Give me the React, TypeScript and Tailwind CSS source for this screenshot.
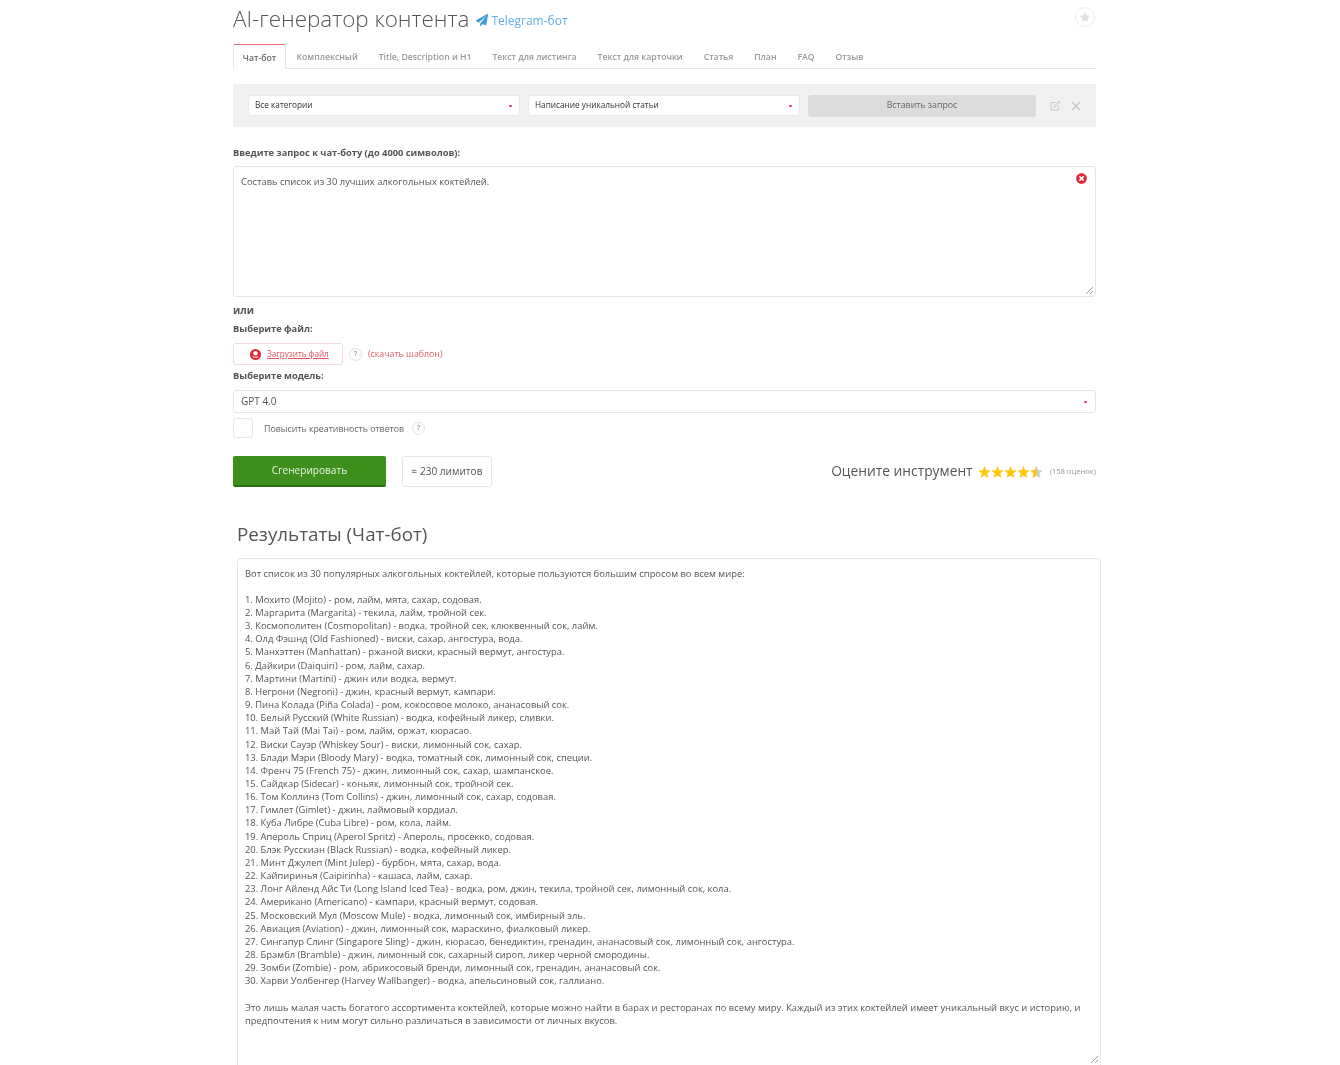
import React from "react";
import { FaPaperPlane, FaStar, FaTimesCircle } from "react-icons/fa";

const tabs = [
  "Комплексный",
  "Title, Description и H1",
  "Текст для листинга",
  "Текст для карточки",
  "Статья",
  "План",
  "FAQ",
  "Отзыв",
];

const cocktails = [
  "1. Мохито (Mojito) - ром, лайм, мята, сахар, содовая.",
  "2. Маргарита (Margarita) - текила, лайм, тройной сек.",
  "3. Космополитен (Cosmopolitan) - водка, тройной сек, клюквенный сок, лайм.",
  "4. Олд Фэшнд (Old Fashioned) - виски, сахар, ангостура, вода.",
  "5. Манхэттен (Manhattan) - ржаной виски, красный вермут, ангостура.",
  "6. Дайкири (Daiquiri) - ром, лайм, сахар.",
  "7. Мартини (Martini) - джин или водка, вермут.",
  "8. Негрони (Negroni) - джин, красный вермут, кампари.",
  "9. Пина Колада (Piña Colada) - ром, кокосовое молоко, ананасовый сок.",
  "10. Белый Русский (White Russian) - водка, кофейный ликер, сливки.",
  "11. Май Тай (Mai Tai) - ром, лайм, оржат, кюрасао.",
  "12. Виски Сауэр (Whiskey Sour) - виски, лимонный сок, сахар.",
  "13. Блади Мэри (Bloody Mary) - водка, томатный сок, лимонный сок, специи.",
  "14. Френч 75 (French 75) - джин, лимонный сок, сахар, шампанское.",
  "15. Сайдкар (Sidecar) - коньяк, лимонный сок, тройной сек.",
  "16. Том Коллинз (Tom Collins) - джин, лимонный сок, сахар, содовая.",
  "17. Гимлет (Gimlet) - джин, лаймовый кордиал.",
  "18. Куба Либре (Cuba Libre) - ром, кола, лайм.",
  "19. Апероль Сприц (Aperol Spritz) - Апероль, просекко, содовая.",
  "20. Блэк Русскиан (Black Russian) - водка, кофейный ликер.",
  "21. Минт Джулеп (Mint Julep) - бурбон, мята, сахар, вода.",
  "22. Кайпиринья (Caipirinha) - кашаса, лайм, сахар.",
  "23. Лонг Айленд Айс Ти (Long Island Iced Tea) - водка, ром, джин, текила, тройной сек, лимонный сок, кола.",
  "24. Американо (Americano) - кампари, красный вермут, содовая.",
  "25. Московский Мул (Moscow Mule) - водка, лимонный сок, имбирный эль.",
  "26. Авиация (Aviation) - джин, лимонный сок, мараскино, фиалковый ликер.",
  "27. Сингапур Слинг (Singapore Sling) - джин, кюрасао, бенедиктин, гренадин, ананасовый сок, лимонный сок, ангостура.",
  "28. Брамбл (Bramble) - джин, лимонный сок, сахарный сироп, ликер черной смородины.",
  "29. Зомби (Zombie) - ром, абрикосовый бренди, лимонный сок, гренадин, ананасовый сок.",
  "30. Харви Уолбенгер (Harvey Wallbanger) - водка, апельсиновый сок, галлиано.",
];

const Help = () => (
  <span className="flex h-[13px] w-[13px] items-center justify-center rounded-full border border-[#e2e2e2] text-[7px] font-semibold text-[#999]">
    ?
  </span>
);

const Caret = () => <span className="h-[2px] w-[3px] rounded-full bg-[#e8374a]" />;

const Select = ({ label }: { label: string }) => (
  <div className="flex h-[21px] w-[272px] items-center justify-between rounded-[3px] border border-[#e9e9e9] bg-white pl-[6px] pr-[7px] text-[8.25px] text-[#333]">
    <span>{label}</span>
    <Caret />
  </div>
);

const ResizeHandle = () => (
  <svg className="absolute bottom-[1px] right-[1px]" width="9" height="9" viewBox="0 0 9 9">
    <path d="M1 8 8 1M5 8 8 5" stroke="#8c8c8c" strokeWidth="0.8" />
  </svg>
);

const Star = ({ half = false }: { half?: boolean }) => (
  <svg width="13" height="12" viewBox="0 0 24 23">
    <path d="M12 0l3.2 8.2 8.8.5-6.8 5.6 2.3 8.5L12 18l-7.5 4.8 2.3-8.5L0 8.7l8.8-.5z" fill={half ? "#c9c9c9" : "#fbc80c"} />
    {half && <path d="M12 0v18l-7.5 4.8 2.3-8.5L0 8.7l8.8-.5z" fill="#fbc80c" />}
  </svg>
);

const App: React.FC = () => {
  return (
    <div className="h-[1065px] w-[1340px] overflow-hidden bg-white pl-[233px] font-['Open_Sans',sans-serif] blur-[0.45px]">
      <div className="w-[863px]">
        {/* Header */}
        <div className="flex h-[44px] items-start justify-between">
          <div className="flex items-center pt-[3px]">
            <h1 className="text-[22.4px] leading-[31px] font-light text-[#555]">AI-генератор контента</h1>
            <FaPaperPlane className="mt-[2px] ml-[7px] text-[12px] text-[#3f9ad8]" />
            <span className="mt-[5px] ml-[3px] text-[12px] text-[#62aee6]">Telegram-бот</span>
          </div>
          <div className="mt-[7px] mr-[1px] flex h-[20px] w-[20px] items-center justify-center rounded-full border border-[#ececec]">
            <FaStar className="text-[10px] text-[#e2e2e2]" />
          </div>
        </div>

        {/* Tabs */}
        <div className="flex h-[25px] border-b border-[#e4e4e4] text-[8.7px] font-semibold">
          <div className="flex h-[25px] w-[53px] items-center justify-center rounded-t-[2px] border-x border-t border-[#e4e4e4] border-t-[#ee6a72] bg-white pt-[3px] text-[#666]">
            Чат-бот
          </div>
          <div className="flex">
            {tabs.map((tab) => (
              <div key={tab} className="flex h-[24px] items-center px-[10.45px] pt-[3px] text-[#999]">
                {tab}
              </div>
            ))}
          </div>
        </div>

        {/* Template panel */}
        <div className="mt-[15px] flex h-[43px] items-center bg-[#f1f1f1] pl-[15px]">
          <Select label="Все категории" />
          <div className="ml-[8px]">
            <Select label="Написание уникальной статьи" />
          </div>
          <div className="ml-[8px] flex h-[22px] w-[228px] items-center justify-center rounded-[3px] bg-[#dcdcdc] text-[8.8px] text-[#666]">
            Вставить запрос
          </div>
          <svg className="ml-[14px]" width="11" height="11" viewBox="0 0 11 11" fill="none" stroke="#c9c9c9" strokeWidth="1">
            <path d="M8.5 6v4H1V2.5h4.5" />
            <path d="M4 7.2l.4-1.8L9 1l1 1-4.4 4.6z" />
          </svg>
          <svg className="ml-[10px]" width="10" height="10" viewBox="0 0 10 10" stroke="#c4c4c4" strokeWidth="1.2">
            <path d="M1 1l8 8M9 1 1 9" />
          </svg>
        </div>

        {/* Prompt */}
        <div className="mt-[19px] text-[9.3px] leading-[13px] font-bold text-[#555]">
          Введите запрос к чат-боту (до 4000 символов):
        </div>
        <div className="relative mt-[7px] h-[131px] rounded-[3px] border border-[#e6e6e6] px-[7px] pt-[8px] text-[9.4px] leading-[14px] text-[#555]">
          Составь список из 30 лучших алкогольных коктейлей.
          <FaTimesCircle className="absolute top-[6px] right-[8px] text-[11px] text-[#e32636]" />
          <ResizeHandle />
        </div>

        <div className="mt-[6px] text-[10px] leading-[14px] font-bold text-[#555]">или</div>
        <div className="mt-[5px] text-[9.3px] leading-[14px] font-bold text-[#555]">Выберите файл:</div>

        {/* Upload */}
        <div className="mt-[7px] flex h-[22px] items-center">
          <div className="flex h-[22px] w-[110px] items-center rounded-[3px] border border-[#fbd8d8] pl-[16px]">
            <svg width="11" height="11" viewBox="0 0 11 11">
              <circle cx="5.5" cy="5.5" r="5.5" fill="#e32636" />
              <circle cx="5.5" cy="4.2" r="2.2" fill="#fff" />
              <path d="M2.8 7.6c1.5 1 3.9 1 5.4 0" stroke="#fff" strokeWidth="1" fill="none" />
            </svg>
            <span className="ml-[6px] text-[8.15px] text-[#e0525c] underline">Загрузить файл</span>
          </div>
          <div className="ml-[6px]">
            <Help />
          </div>
          <span className="mt-[1px] ml-[6px] text-[8.8px] text-[#d9606a]">(скачать шаблон)</span>
        </div>

        <div className="mt-[4px] text-[9.3px] leading-[14px] font-bold text-[#555]">Выберите модель:</div>

        {/* Model */}
        <div className="mt-[7px] flex h-[23px] items-center justify-between rounded-[3px] border border-[#e6e6e6] pr-[8px] pl-[7px] text-[10px] text-[#555]">
          <span>GPT 4.0</span>
          <Caret />
        </div>

        <div className="mt-[5px] flex h-[20px] items-center">
          <div className="h-[20px] w-[20px] rounded-[3px] border border-[#e6e6e6]" />
          <span className="mt-[3px] ml-[11px] text-[8.8px] text-[#666]">Повысить креативность ответов</span>
          <div className="ml-[8px]">
            <Help />
          </div>
        </div>

        {/* Actions */}
        <div className="mt-[18px] flex h-[31px] items-center">
          <div className="flex h-[31px] w-[153px] items-center justify-center rounded-[2px] border-b-2 border-[#2c7010] bg-[#3f8f1d] text-[10.1px] text-[#e8f3e2]">
            Сгенерировать
          </div>
          <div className="ml-[16px] flex h-[31px] w-[90px] items-center justify-center rounded-[3px] border border-[#e6e6e6] text-[10.1px] text-[#555]">
            ≈ 230 лимитов
          </div>
          <div className="ml-auto flex items-center">
            <span className="text-[13.8px] text-[#555]">Оцените инструмент</span>
            <span className="ml-[5px] flex">
              <Star />
              <Star />
              <Star />
              <Star />
              <Star half />
            </span>
            <span className="ml-[7px] text-[7.6px] text-[#999]">(158 оценок)</span>
          </div>
        </div>
      </div>

      {/* Results */}
      <div className="ml-[4px] w-[864px]">
        <h2 className="mt-[34px] text-[18.8px] leading-[26px] font-normal text-[#555]">Результаты (Чат-бот)</h2>
        <div className="relative mt-[11px] h-[520px] rounded-t-[3px] border border-[#e6e6e6] px-[7px] pt-[7.5px] text-[9.39px] leading-[13.15px] text-[#555]">
          <p>Вот список из 30 популярных алкогольных коктейлей, которые пользуются большим спросом во всем мире:</p>
          <p className="mt-[13.15px]">
            {cocktails.map((line) => (
              <span key={line} className="block">
                {line}
              </span>
            ))}
          </p>
          <p className="mt-[13.15px]">
            Это лишь малая часть богатого ассортимента коктейлей, которые можно найти в барах и ресторанах по всему миру. Каждый из этих коктейлей имеет уникальный вкус и историю, и предпочтения к ним могут сильно различаться в зависимости от личных вкусов.
          </p>
          <div className="absolute top-[506px] right-0">
            <ResizeHandle />
          </div>
        </div>
      </div>
    </div>
  );
};

export default App;
